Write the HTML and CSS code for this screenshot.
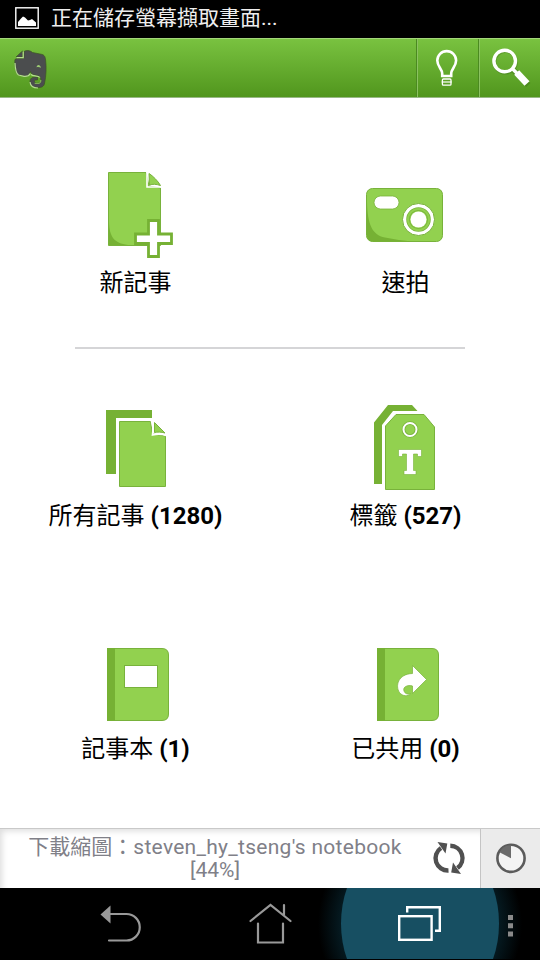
FILE: index.html
```html
<!DOCTYPE html>
<html lang="zh-Hant">
<head>
<meta charset="utf-8">
<title>Evernote</title>
<link rel="stylesheet" href="styles.css">
</head>
<body>
<div class="screen">
  <div class="statusbar">
    <svg class="pic" width="26" height="24" viewBox="14 6 26 24"><rect x="15.8" y="7.8" width="22.4" height="20.4" fill="none" stroke="#fff" stroke-width="1.4"/><path d="M18 26V22L21 18.500L23 16.500L25 17.500L28 20.500L30 20L32 19L36 22.500V26Z" fill="#fff"/></svg>
    <span class="notice">正在儲存螢幕擷取畫面...</span>
  </div>

  <header class="header">
    <svg class="logo" width="60" height="58" viewBox="0 39 60 58">
      <g fill="#4b4d4e" stroke="#3c5524" stroke-width=".7">
        <path d="M24 51.500C26 50 30 50.200 32.500 52.500L40 54C44 54.500 45.200 56 45.600 60C46.500 67 46.200 76 44.600 83C44 86.500 42 87.700 37.500 87.500C32.500 87.600 30 85.500 30 81.500C30 78.500 32 76.800 36 77L37.500 77.200V80H35.500C34.200 80 34 82.500 36 83H39C41 82.700 41.200 80.500 40.600 78.500C40 75.800 37 75.600 34 75C32 74.500 31 73 30.500 71.500C29 76 27 76.800 23.500 76L18.500 74.800C16 74 14.800 67 14.800 61C14.800 59.200 15.500 58.500 17.500 58.500H22.500C23.600 58.500 24 58 24 57Z"/>
        <path d="M16 57L22.500 51V57Z"/>
      </g>
      <path d="M16.500 57.700H23.200V51.500M15 63C15.200 68 16 73.500 18.500 75L24 76.400C27 76.700 29 76 30.300 73.500M31 74.500C33 76.500 38 75 40 77.500M30 82C30.300 86 33 88 38 88" fill="none" stroke="#b5dc90" stroke-width="1.200"/>
      <path d="M36.500 67.200C37.300 64.300 40 64.300 41 67.800C39.500 67 38.200 67 36.500 67.200Z" fill="#9ccb73"/>
      <path d="M34.700 83.300H39C40.500 83 41 81.500 40.800 80" fill="none" stroke="#8cc45c" stroke-width="1"/>
    </svg>
    <div class="action">
      <svg width="60" height="58" viewBox="417.300 39 60 58"><g fill="none" stroke="#fff"><path d="M442.500 76V73.500C442.500 69 437.600 66.500 437.600 60.500A9.400 9.400 0 0 1 456.400 60.500C456.400 66.500 451.500 69 451.500 73.500V76Z" stroke-width="2.600"/><rect x="442.700" y="79" width="8.600" height="6.200" rx="1" stroke-width="1.300"/><path d="M442 82H452" stroke-width="1.200"/></g></svg>
    </div>
    <div class="action">
      <svg width="60" height="58" viewBox="479.300 39 60 58"><g transform="translate(.6 1)" opacity=".2" stroke="#173b00" fill="none"><circle cx="505" cy="61" r="10.800" stroke-width="3.600"/><path d="M513.500 69.500L528 84" stroke-width="6"/></g><circle cx="505" cy="61" r="10.800" fill="none" stroke="#fff" stroke-width="3.400"/><path d="M512 68L518 74" stroke="#fff" stroke-width="3.400"/><path d="M517 72.500L527.300 83.500" stroke="#fff" stroke-width="6.800"/></svg>
    </div>
  </header>

  <main class="home">
    <div class="row first">
      <a class="tile">
        <svg class="icon" viewBox="75 163 120 100">
          <path d="M108.500 172.500H146L149 186L160.500 188V245.500H108.500Z" fill="#92d14f" stroke="#78b23b"/>
          <path d="M109 222C109.500 237 114 243 128 245H109Z" fill="#76b134"/>
          <path d="M149 173.500C153 176 158 181 160.500 185.500C156 184 152.500 184 149.500 185Z" fill="#92d14f" stroke="#78b23b"/>
          <path d="M147 172V187H161" fill="none" stroke="#fff" stroke-width="1.600"/>
          <path d="M148.500 220.500H158.500V234H171.500V243.500H158.500V256.500H148.500V243.500H135.500V234H148.500Z" fill="#fff" stroke="#76b134" stroke-width="2.800"/>
        </svg>
        <span class="label">新記事</span>
      </a>
      <a class="tile">
        <svg class="icon" viewBox="345 163 120 100">
          <rect x="366.500" y="188.500" width="76" height="53" rx="6" fill="#92d14f" stroke="#78b23b"/>
          <path d="M367 202C367.500 224 372 235 385 237.500C394 239.500 404 240.500 412 241.500H372C369 241 367 239 367 236Z" fill="#76b134"/>
          <rect x="374" y="196" width="25" height="13" rx="6.500" fill="#fff" stroke="#78b23b" stroke-width=".8"/>
          <circle cx="418.500" cy="219.500" r="16" fill="#fff" stroke="#78b23b"/>
          <circle cx="418.500" cy="219.500" r="10.500" fill="#92d14f" stroke="#78b23b" stroke-width="3.500"/>
          <circle cx="418.500" cy="219.500" r="10.500" fill="none" stroke="#92d14f" stroke-width="2"/>
          <circle cx="418.500" cy="219.500" r="8" fill="#fff"/>
        </svg>
        <span class="label">速拍</span>
      </a>
    </div>
    <div class="divider"></div>
    <div class="row second">
      <a class="tile">
        <svg class="icon" viewBox="75 396 120 100">
          <path d="M106 410H152V418H116V474H106Z" fill="#76b134"/>
          <path d="M119.500 421.500H150.500L152.500 434L165.500 436V486.500H119.500Z" fill="#92d14f" stroke="#78b23b"/>
          <path d="M154.500 422.500L165 433C161 431.800 157.500 432 154.500 432.500Z" fill="#92d14f" stroke="#78b23b"/>
          <path d="M151.500 421C153.500 426 153 431 152.500 435C157 434 162 434 166 435.500" fill="none" stroke="#fff" stroke-width="1.600"/>
        </svg>
        <span class="label">所有記事 <b>(1280)</b></span>
      </a>
      <a class="tile">
        <svg class="icon" viewBox="345 396 120 100">
          <path d="M374 484V422.500L388 405H412L417.500 411H393L382 425V484Z" fill="#76b134"/>
          <path d="M385.500 489.500V426L396 414.500H424L434.500 427V489.500Z" fill="#92d14f" stroke="#78b23b"/>
          <circle cx="410" cy="429.500" r="6.500" fill="none" stroke="#78b23b" stroke-width="3.600"/>
          <circle cx="410" cy="429.500" r="6.500" fill="none" stroke="#fff" stroke-width="2"/>
          <path d="M398.500 449.500H421.500V456.500H417.500V454H413.500V470.500H416V474.500H404V470.500H406.500V454H402.500V456.500H398.500Z" fill="#fff" stroke="#78b23b" stroke-width=".6"/>
        </svg>
        <span class="label">標籤 <b>(527)</b></span>
      </a>
    </div>
    <div class="row">
      <a class="tile">
        <svg class="icon" viewBox="75 629 120 100">
          <path d="M107.500 648.500H162Q168.500 648.500 168.500 655V714Q168.500 720.500 162 720.500H107.500Z" fill="#92d14f" stroke="#78b23b"/>
          <path d="M107 648H115V721H107Z" fill="#76b134"/>
          <rect x="124.500" y="665.500" width="33" height="22" fill="#fff" stroke="#78b23b"/>
        </svg>
        <span class="label">記事本 <b>(1)</b></span>
      </a>
      <a class="tile">
        <svg class="icon" viewBox="345 629 120 100">
          <path d="M377.500 648.500H432Q438.500 648.500 438.500 655V714Q438.500 720.500 432 720.500H377.500Z" fill="#92d14f" stroke="#78b23b"/>
          <path d="M377 648H385V721H377Z" fill="#76b134"/>
          <path d="M412.500 665.500L426.500 679.500L412.500 693.500V686C407.500 684.500 402.500 687 404 691C405 694 408 694.500 410.500 694C408 696.500 402.500 696.500 399.500 692.500C395 686 398 674 412.500 673.500Z" fill="#fff" stroke="#78b23b" stroke-width=".7"/>
        </svg>
        <span class="label">已共用 <b>(0)</b></span>
      </a>
    </div>
  </main>

  <footer class="sync">
    <div class="progress">
      <p class="message">下載縮圖：<span class="name">steven_hy_tseng's notebook</span><br>[44%]</p>
      <svg width="40" height="40" viewBox="430 838.500 40 40"><g fill="none" stroke="#505050" stroke-width="4.400"><path d="M450.300 845.300A12.300 12.300 0 0 1 457.500 867.500"/><path d="M448.500 870A12.300 12.300 0 0 1 441 847.500"/></g><path d="M437.500 841.500L447.300 843L445.500 853Z M461 873.500L451.200 872L453 862Z" fill="#505050"/></svg>
    </div>
    <div class="quota">
      <svg width="40" height="40" viewBox="491 838.700 40 40"><circle cx="511" cy="858" r="13.600" fill="#f4f4f4" stroke="#5b5b5b" stroke-width="2.600"/><path d="M511 858V845A13 13 0 0 0 499.500 852Z" fill="#6b6b6b"/></svg>
    </div>
  </footer>

  <nav class="navbar">
    <svg width="540" height="72" viewBox="0 888 540 72">
      <defs><radialGradient id="glow" gradientUnits="userSpaceOnUse" cx="420" cy="924" r="102"><stop offset=".74" stop-color="#061e26"/><stop offset="1" stop-color="#000"/></radialGradient></defs>
      <rect x="310" y="888" width="220" height="71" fill="url(#glow)"/>
      <path d="M347 888H493C501 910 501 937 493 959H347C339 937 339 910 347 888Z" fill="#174f62"/>
      <g fill="none" stroke="#999" stroke-width="2.200" stroke-linecap="round">
        <path d="M110 914H126.500A13 13 0 0 1 126.500 940.500H109"/>
        <path d="M250.500 921L270.500 905L290.500 921M284 914.500V905M258 923.500V942.500H283V923.500"/>
      </g>
      <path d="M100.500 914.500L110.500 905.500V923.500Z" fill="#999"/>
      <g fill="none" stroke="#fff" stroke-width="2.400"><rect x="399.200" y="916.200" width="32.400" height="23.600"/><path d="M407.200 912.500V907.200H439.800V930.800H435"/></g>
      <path d="M508 915H513V920H508ZM508 923.200H513V928.200H508ZM508 931.500H513V936.500H508Z" fill="#8a8a8a"/>
    </svg>
  </nav>
</div>
</body>
</html>
```
FILE: styles.css
```css
* { box-sizing: border-box; }

body {
  margin: 0;
  background: #fff;
  font-family: Roboto, "Noto Sans CJK TC", sans-serif;
}

svg { display: block; flex: none; }

.screen {
  display: flex;
  flex-direction: column;
  width: 540px;
  height: 960px;
  overflow: hidden;
}

.statusbar {
  display: flex;
  align-items: center;
  height: 38px;
  padding: 0 0 2px 14px;
  background: #000;
  color: #eee;
}

.notice {
  margin-left: 11px;
  font-size: 21px;
  line-height: 32px;
  white-space: nowrap;
}

.header {
  display: flex;
  height: 60px;
  border-top: 1px solid #a3d67a;
  border-bottom: 1px solid #98b886;
  background: linear-gradient(#79c240, #51961d);
}

.logo { margin-right: auto; }

.action {
  width: 62px;
  border-left: 1px solid #4b8a20;
  box-shadow: inset 1px 0 #8bc261;
}

.home {
  height: 730px;
  padding-top: 65px;
}

.row {
  display: flex;
  height: 233px;
}

.first { height: 184px; }
.second { margin-top: 47px; }

.divider {
  height: 2px;
  margin: 0 75px;
  background: #d5d5d7;
}

.tile {
  display: flex;
  flex-direction: column;
  align-items: center;
  width: 270px;
}

.icon {
  width: 120px;
  height: 100px;
}

.label {
  padding-left: 1px;
  color: #000;
  font-size: 24px;
  line-height: 40px;
  white-space: nowrap;
}

.sync {
  display: flex;
  height: 60px;
  border-top: 1px solid #c9c9c9;
}

.progress {
  display: flex;
  align-items: center;
  width: 480px;
  background: #fff;
  box-shadow: inset 4px 4px 6px -2px #ddd;
}

.message {
  width: 430px;
  margin: 0;
  color: #808088;
  font-size: 21px;
  line-height: 23px;
  text-align: center;
  white-space: nowrap;
}

.name { letter-spacing: .28px; }

.quota {
  display: flex;
  align-items: center;
  justify-content: center;
  width: 60px;
  border-left: 1px solid #c4c4c4;
  background: #ebebeb;
}

.navbar {
  height: 72px;
  background: #000;
}
```
